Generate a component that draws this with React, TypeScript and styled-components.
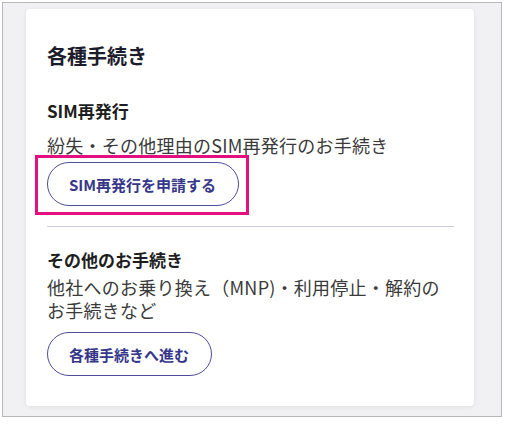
import React from 'react';
import styled, { createGlobalStyle } from 'styled-components';

const GlobalStyle = createGlobalStyle`
  body {
    margin: 0;
    background: #ffffff;
    font-family: "Noto Sans CJK JP", "Noto Sans", sans-serif;
  }
`;

const Frame = styled.div`
  box-sizing: border-box;
  width: 500px;
  height: 415px;
  margin: 2px 0 0 2px;
  border: 1px solid #b8b8b8;
  background: #f1f1f3;
  padding: 6px 27px 9px 23px;
`;

const Card = styled.section`
  box-sizing: border-box;
  height: 397px;
  background: #ffffff;
  border-radius: 4px;
  box-shadow: 0 1px 4px rgba(0, 0, 0, 0.08);
  padding: 33px 20px 30px 21px;
  display: flex;
  flex-direction: column;
  align-items: flex-start;
`;

const Title = styled.h2`
  margin: 0;
  font-size: 20px;
  line-height: 28px;
  font-weight: 700;
  color: #1c1c2c;
`;

const SectionTitle = styled.h3<{ $gap: number }>`
  margin: ${({ $gap }) => $gap}px 0 0;
  font-size: 17px;
  line-height: 24px;
  font-weight: 700;
  color: #1e1e1e;
`;

const Description = styled.p<{ $gap: number }>`
  margin: ${({ $gap }) => $gap}px 0 0;
  font-size: 18px;
  line-height: 23px;
  letter-spacing: 0.25px;
  color: #3a3a3a;
  max-width: 400px;
`;

const Highlight = styled.div`
  margin: -2px 0 0 -12px;
  padding: 4px 7px 6px 9px;
  border: 3px solid #e5107f;
  display: inline-flex;
`;

const PillButton = styled.button`
  box-sizing: border-box;
  height: 44px;
  padding: 0 22px 0 21px;
  border: 1.5px solid #4d4d9c;
  border-radius: 22px;
  background: #ffffff;
  color: #37378a;
  font-family: inherit;
  font-size: 15px;
  font-weight: 700;
  cursor: pointer;
`;

const Divider = styled.hr`
  align-self: stretch;
  margin: 11px 0 0;
  border: none;
  border-top: 1px solid #cfcfe0;
`;

const ButtonRow = styled.div`
  margin-top: 10px;
`;

export default function App() {
  return (
    <>
      <GlobalStyle />
      <Frame>
        <Card>
          <Title>各種手続き</Title>

          <SectionTitle $gap={29}>SIM再発行</SectionTitle>
          <Description $gap={11}>紛失・その他理由のSIM再発行のお手続き</Description>
          <Highlight>
            <PillButton>SIM再発行を申請する</PillButton>
          </Highlight>

          <Divider />

          <SectionTitle $gap={21}>その他のお手続き</SectionTitle>
          <Description $gap={4}>他社へのお乗り換え（MNP)・利用停止・解約のお手続きなど</Description>
          <ButtonRow>
            <PillButton>各種手続きへ進む</PillButton>
          </ButtonRow>
        </Card>
      </Frame>
    </>
  );
}
